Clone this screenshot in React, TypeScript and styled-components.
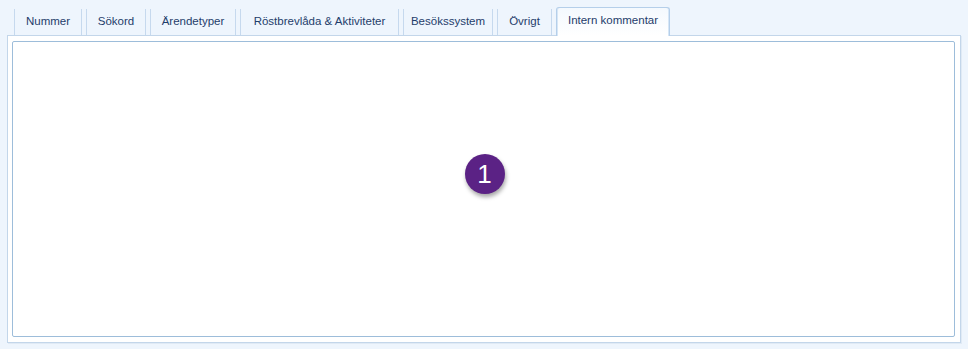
import React from "react";
import styled, { createGlobalStyle } from "styled-components";

const GlobalStyle = createGlobalStyle`
  html, body { margin: 0; padding: 0; background: #eef5fd; }
  body { font-family: "Liberation Sans", Arial, sans-serif; }
`;

const Page = styled.div`
  width: 968px;
  height: 349px;
  box-sizing: border-box;
  padding: 7px 7px 6px 7px;
  display: flex;
  flex-direction: column;
  background: #eef5fd;
`;

const TabStrip = styled.div`
  display: flex;
  align-items: flex-end;
  gap: 4px;
  padding-left: 7px;
  height: 28px;
  position: relative;
  z-index: 1;
`;

const Tab = styled.div<{ $active?: boolean; $w: number }>`
  box-sizing: border-box;
  width: ${(p) => p.$w}px;
  display: flex;
  align-items: center;
  justify-content: center;
  padding: 0 0 2px 0;
  font-size: 11.5px;
  color: #1f3d6b;
  white-space: nowrap;
  height: ${(p) => (p.$active ? "29px" : "26px")};
  margin-bottom: ${(p) => (p.$active ? "-1px" : "0")};
  border-left: 1px solid #c6d9ee;
  border-right: 1px solid #c6d9ee;
  background: ${(p) =>
    p.$active ? "linear-gradient(#f4f9fe, #ffffff)" : "transparent"};
  ${(p) =>
    p.$active &&
    `
    border: 1px solid #b5cfea;
    border-bottom: none;
    border-radius: 3px 3px 0 0;
    box-shadow: inset 1px 0 0 #d6e6f6, inset -1px 0 0 #d6e6f6;
    padding-bottom: 4px;
  `}
`;

const Panel = styled.div`
  flex: 1;
  box-sizing: border-box;
  border: 1px solid #c3d6ea;
  background: #ffffff;
  padding: 5px 5px 5px 4px;
  display: flex;
  box-shadow: 1px 1px 0 #e0eaf5;
`;

const Inner = styled.div`
  flex: 1;
  border: 1px solid #9dbdda;
  border-radius: 2px;
  background: #ffffff;
  display: flex;
  align-items: flex-start;
  justify-content: center;
  padding-top: 112px;
`;

const Badge = styled.div`
  width: 40px;
  height: 40px;
  border-radius: 50%;
  background: #5b2285;
  color: #ffffff;
  font-family: "Liberation Sans", Arial, sans-serif;
  font-size: 26px;
  display: flex;
  align-items: center;
  justify-content: center;
  box-shadow: 1px 3px 4px rgba(0, 0, 0, 0.35);
  margin-left: 2px;
`;

const tabs: { label: string; w: number }[] = [
  { label: "Nummer", w: 68 },
  { label: "Sökord", w: 60 },
  { label: "Ärendetyper", w: 86 },
  { label: "Röstbrevlåda & Aktiviteter", w: 159 },
  { label: "Besökssystem", w: 90 },
  { label: "Övrigt", w: 55 },
  { label: "Intern kommentar", w: 114 },
];

export default function App() {
  return (
    <>
      <GlobalStyle />
      <Page>
        <TabStrip>
          {tabs.map((t, i) => (
            <Tab key={t.label} $w={t.w} $active={i === tabs.length - 1}>
              {t.label}
            </Tab>
          ))}
        </TabStrip>
        <Panel>
          <Inner>
            <Badge>1</Badge>
          </Inner>
        </Panel>
      </Page>
    </>
  );
}
